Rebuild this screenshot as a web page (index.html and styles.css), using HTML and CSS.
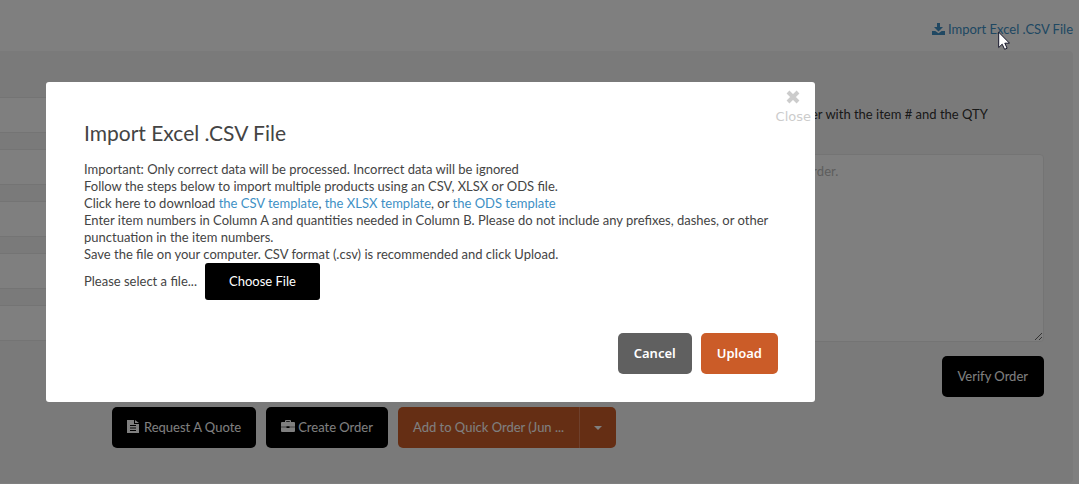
FILE: index.html
```html
<!DOCTYPE html>
<html lang="en">
<head>
<meta charset="utf-8">
<title>Quick Order</title>
<link rel="stylesheet" href="styles.css">
</head>
<body>
<main class="page">
  <header class="toolbar">
    <a class="link import-link" href="#import">
      <svg class="icon-download" viewBox="0 0 13 12" aria-hidden="true"><path d="M5 0h3v4h3L6.500 8.500 2 4h3zM0 8h3.300l3.200 2.300L9.700 8H13v4H0z"/></svg>
      <span>Import Excel .CSV File</span>
    </a>
  </header>
  <section class="panel">
    <div class="columns">
      <div class="rows">
        <input class="field" type="text" aria-label="Item 1">
        <input class="field" type="text" aria-label="Item 2">
        <input class="field" type="text" aria-label="Item 3">
        <input class="field" type="text" aria-label="Item 4">
        <input class="field" type="text" aria-label="Item 5">
      </div>
      <div class="paste">
        <label class="paste-label" for="order">er with the item # and the QTY</label>
        <textarea class="paste-box" id="order" placeholder="order."></textarea>
        <button class="btn btn-black" type="button">Verify Order</button>
      </div>
    </div>
    <div class="actions">
      <button class="btn btn-black" type="button">
        <svg class="icon-file" viewBox="0 0 12 13" aria-hidden="true"><path fill-rule="evenodd" d="M0 0h7v4h5v9H0zM8 0l4 3H8zM3 5v1h6V5zM3 7.500v1h6v-1zM3 10v1h6v-1z"/></svg>
        <span>Request A Quote</span>
      </button>
      <button class="btn btn-black btn-case" type="button">
        <svg class="icon-case" viewBox="0 0 14 12" aria-hidden="true"><path fill-rule="evenodd" d="M4 2V1q0-1 1-1h4q1 0 1 1v1h3q1 0 1 1v3.800H8.500V6.300h-3v.500H0V3q0-1 1-1zM5.200 1.200V2h3.600v-.800zM0 7.200h5.500V8h3v-.800H14V11q0 1-1 1H1q-1 0-1-1z"/></svg>
        <span>Create Order</span>
      </button>
      <div class="split">
        <button class="btn btn-orange split-main" type="button">Add to Quick Order (Jun ...</button>
        <button class="btn btn-orange split-toggle" type="button" aria-label="More orders"><span class="caret"></span></button>
      </div>
    </div>
  </section>
</main>

<div class="overlay">
  <div class="modal" role="dialog" aria-labelledby="modal-title">
    <button class="close" type="button">
      <svg class="icon-close" viewBox="0 0 14 14" aria-hidden="true"><path d="M2 2l10 10M12 2L2 12"/></svg>
      <span>Close</span>
    </button>
    <h2 class="title" id="modal-title">Import Excel .CSV File</h2>
    <div class="copy">
      <p>Important: Only correct data will be processed. Incorrect data will be ignored</p>
      <p>Follow the steps below to import multiple products using an CSV, XLSX or ODS file.</p>
      <p>Click here to download <a class="link" href="#csv">the CSV template</a>, <a class="link" href="#xlsx">the XLSX template</a>, or <a class="link" href="#ods">the ODS template</a></p>
      <p>Enter item numbers in Column A and quantities needed in Column B. Please do not include any prefixes, dashes, or other punctuation in the item numbers.</p>
      <p>Save the file on your computer. CSV format (.csv) is recommended and click Upload.</p>
    </div>
    <div class="picker">
      <label for="choose">Please select a file...</label>
      <button class="btn btn-black btn-choose" id="choose" type="button">Choose File</button>
    </div>
    <div class="modal-actions">
      <button class="btn btn-strong btn-gray" type="button">Cancel</button>
      <button class="btn btn-strong btn-orange" type="button">Upload</button>
    </div>
  </div>
</div>

<svg class="cursor" viewBox="0 0 12 19" aria-hidden="true"><path d="M.700 1.200v15.300l3.500-3.300 2.400 5.100 2.500-1.100-2.300-5h4.700z"/></svg>
</body>
</html>
```
FILE: styles.css
```css
* {
  box-sizing: border-box;
}

body {
  margin: 0;
  background: #fff;
  color: #444;
  font: 13px/17px Lato, "Liberation Sans", sans-serif;
}

button,
input,
textarea {
  font: inherit;
}

h2,
p {
  margin: 0;
}

.link {
  color: #4090c5;
  text-decoration: none;
}

.page {
  padding-right: 6px;
}

.toolbar {
  display: flex;
  justify-content: flex-end;
  padding: 21px 0 13px;
}

.import-link {
  display: flex;
  gap: 3px;
}

.icon-download {
  width: 13px;
  height: 12px;
  margin-top: 2px;
  fill: currentColor;
}

.panel {
  padding: 46px 29px 35px 0;
  border-radius: 0 4px 4px 0;
  background: #f5f5f5;
}

.columns {
  display: grid;
  grid-template-columns: 1fr 250px;
  gap: 40px;
}

.rows {
  display: flex;
  flex-direction: column;
  gap: 16px;
}

.field {
  width: 100%;
  height: 36px;
  padding: 0 12px;
  border: 1px solid #e9e9e9;
  border-left: 0;
  background: #fff;
}

.paste {
  display: flex;
  flex-direction: column;
  align-items: flex-end;
}

.paste-label {
  width: 100%;
  padding: 9px 0 0 17px;
  color: #333;
}

.paste-box {
  width: 100%;
  height: 188px;
  margin: 31px 0 14px;
  padding: 8px 10px;
  border: 1px solid #e9e9e9;
  border-radius: 4px;
  background: #fff;
}

.paste-box::placeholder {
  color: #bbb;
}

.btn {
  min-height: 41px;
  padding: 0 16px;
  border: 0;
  border-radius: 5px;
  color: #fff;
  white-space: nowrap;
}

.btn-black {
  background: #000;
}

.btn-gray {
  background: #606060;
}

.btn-orange {
  background: #cb5c28;
}

.actions {
  display: flex;
  gap: 10px;
  margin-top: 10px;
  padding-left: 112px;
}

.actions .btn {
  display: flex;
  align-items: center;
  gap: 5px;
  padding: 0 15px;
}

.actions .btn-case {
  gap: 3px;
}

.icon-file {
  width: 12px;
  height: 13px;
  margin-bottom: 3px;
  fill: currentColor;
}

.icon-case {
  width: 14px;
  height: 12px;
  margin-bottom: 4px;
  fill: currentColor;
}

.split {
  display: flex;
}

.split .split-main {
  border-radius: 5px 0 0 5px;
}

.split .split-toggle {
  padding: 0 14px;
  border-left: 1px solid #dd8058;
  border-radius: 0 5px 5px 0;
}

.caret {
  border: 4px solid transparent;
  border-top-color: currentColor;
  border-bottom: 0;
}

.overlay {
  position: fixed;
  inset: 0;
  padding: 82px 264px 0 46px;
  background: rgba(0, 0, 0, 0.5);
}

.modal {
  position: relative;
  padding: 39px 37px 28px 38px;
  border-radius: 3px;
  background: #fff;
}

.close {
  position: absolute;
  top: 8px;
  right: 4px;
  display: flex;
  flex-direction: column;
  align-items: center;
  gap: 4px;
  padding: 0;
  border: 0;
  background: none;
  color: #ccc;
  font: 13px/17px "DejaVu Sans", sans-serif;
}

.icon-close {
  width: 14px;
  height: 14px;
  fill: none;
  stroke: currentColor;
  stroke-width: 4;
}

.title {
  margin-bottom: 17px;
  font-size: 21px;
  font-weight: 400;
  line-height: 23px;
}

.picker {
  display: flex;
  align-items: center;
  gap: 8px;
}

.btn-choose {
  min-height: 37px;
  padding: 0 24px;
  border-radius: 3px;
}

.modal-actions {
  display: flex;
  justify-content: flex-end;
  gap: 9px;
  margin-top: 33px;
}

.btn-strong {
  font: 600 13px/17px "Noto Sans", sans-serif;
}

.cursor {
  position: fixed;
  top: 31px;
  left: 998px;
  width: 12px;
  height: 19px;
  fill: #fff;
  stroke: #16162a;
}
```
